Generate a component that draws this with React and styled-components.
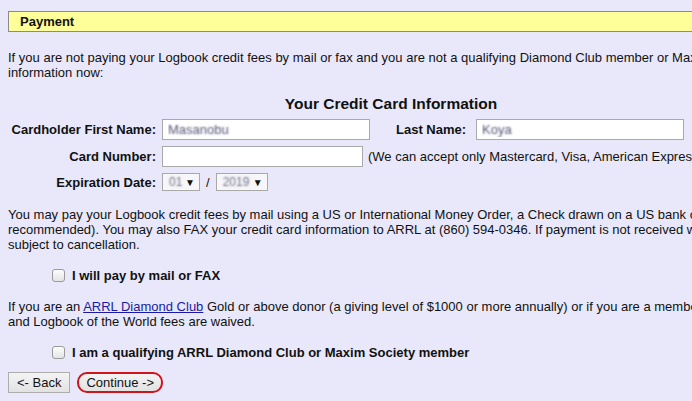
import React from "react";
import styled, { createGlobalStyle } from "styled-components";

const colors = {
  bg: "#e8e8fa",
  bar: "#ffff99",
  barBorder: "#8a8a8a",
  text: "#111111",
  link: "#1a1aa6",
  field: "#ffffff",
  fieldBorder: "#a9a9a9",
};

const GlobalStyle = createGlobalStyle`
  html, body {
    margin: 0;
    background: ${colors.bg};
    overflow: hidden;
  }
  body {
    font-family: "Liberation Sans", Arial, sans-serif;
    font-size: 13px;
    color: ${colors.text};
  }
`;

const Page = styled.div`
  width: 766px;
  padding: 11px 8px 8px;
  line-height: 15px;
`;

const SectionBar = styled.div`
  height: 19px;
  background: ${colors.bar};
  border: 1px solid ${colors.barBorder};
  padding-left: 11px;
  font-weight: bold;
  line-height: 19px;
  width: 900px;
`;

const Para = styled.p`
  margin: ${(p) => p.$top || 0}px 0 0;
  white-space: nowrap;
  line-height: 15px;
`;

const Heading = styled.h3`
  margin: 15px 0 0;
  text-align: center;
  font-size: 15.5px;
  line-height: 18px;
  font-weight: bold;
`;

const FormRow = styled.div`
  display: flex;
  align-items: center;
  margin-top: ${(p) => p.$top}px;
  white-space: nowrap;
`;

const Label = styled.span`
  font-weight: bold;
  width: ${(p) => p.$width || 148}px;
  text-align: right;
  margin-left: ${(p) => p.$left || 0}px;
  margin-right: ${(p) => p.$right || 6}px;
  flex-shrink: 0;
`;

const TextInput = styled.input`
  box-sizing: border-box;
  width: ${(p) => p.$width}px;
  height: 21px;
  border: 1px solid ${colors.fieldBorder};
  background: ${colors.field};
  padding: 1px 5px;
  font-family: "Liberation Sans", Arial, sans-serif;
  font-size: 13px;
  color: transparent;
  text-shadow: 0 0 2px rgba(60, 60, 100, 0.85);
  outline: none;
  flex-shrink: 0;
`;

const Note = styled.span`
  margin-left: 5px;
`;

const Select = styled.div`
  box-sizing: border-box;
  width: ${(p) => p.$width}px;
  height: 18px;
  border: 1px solid ${colors.fieldBorder};
  background: #f7f7f9;
  display: flex;
  align-items: center;
  justify-content: space-between;
  padding: 0 4px 0 6px;
  font-size: 12px;
  flex-shrink: 0;
`;

const Blurred = styled.span`
  color: transparent;
  text-shadow: 0 0 2px rgba(90, 90, 120, 0.85);
`;

const Arrow = styled.span`
  font-size: 10px;
  color: #111;
`;

const Slash = styled.span`
  margin: 0 6px;
`;

const CheckRow = styled.label`
  display: flex;
  align-items: center;
  margin: ${(p) => p.$top}px 0 0 44px;
  font-weight: bold;
  height: 15px;
`;

const Box = styled.span`
  box-sizing: border-box;
  width: 13px;
  height: 13px;
  border: 1px solid #9a9a9a;
  border-radius: 3px;
  background: linear-gradient(#fdfdfd, #e4e4e4);
  margin-right: 7px;
`;

const Link = styled.a`
  color: ${colors.link};
  text-decoration: underline;
`;

const ButtonRow = styled.div`
  display: flex;
  align-items: center;
  margin-top: 12px;
`;

const Button = styled.button`
  box-sizing: border-box;
  height: 21px;
  padding: 0 8px;
  border: 1px solid #adadad;
  background: linear-gradient(#f4f4f4, #e2e2e2);
  font-family: "Liberation Sans", Arial, sans-serif;
  font-size: 13px;
  color: #111;
  border-radius: 0;
`;

const Highlight = styled(Button)`
  margin-left: 7px;
  padding: 0 7px;
  border: 2px solid #d0141c;
  border-radius: 10px;
`;

export default function App() {
  return (
    <>
      <GlobalStyle />
      <Page>
        <SectionBar>Payment</SectionBar>
        <Para $top={18}>
          If you are not paying your Logbook credit fees by mail or fax and you
          are not a qualifying Diamond Club member or Maxim Society member,
          please enter your credit card
          <br />
          information now:
        </Para>

        <Heading>Your Credit Card Information</Heading>

        <FormRow $top={6}>
          <Label>Cardholder First Name:</Label>
          <TextInput $width={208} defaultValue="Masanobu" />
          <Label $width={70} $left={26} $right={10}>
            Last Name:
          </Label>
          <TextInput $width={208} defaultValue="Koya" />
        </FormRow>
        <FormRow $top={6}>
          <Label>Card Number:</Label>
          <TextInput $width={201} defaultValue="" />
          <Note>
            (We can accept only Mastercard, Visa, American Express and
            Discover.)
          </Note>
        </FormRow>
        <FormRow $top={6}>
          <Label>Expiration Date:</Label>
          <Select $width={38}>
            <Blurred>01</Blurred>
            <Arrow>▼</Arrow>
          </Select>
          <Slash>/</Slash>
          <Select $width={52}>
            <Blurred>2019</Blurred>
            <Arrow>▼</Arrow>
          </Select>
        </FormRow>

        <Para $top={16}>
          You may pay your Logbook credit fees by mail using a US or
          International Money Order, a Check drawn on a US bank or a US Postal
          Money Order (Check
          <br />
          recommended). You may also FAX your credit card information to ARRL
          at (860) 594-0346. If payment is not received within 30 days, your
          order is
          <br />
          subject to cancellation.
        </Para>

        <CheckRow $top={16}>
          <Box />I will pay by mail or FAX
        </CheckRow>

        <Para $top={16}>
          If you are an <Link href="#">ARRL Diamond Club</Link> Gold or above
          donor (a giving level of $1000 or more annually) or if you are a
          member of the Maxim Society, your Logbook
          <br />
          and Logbook of the World fees are waived.
        </Para>

        <CheckRow $top={16}>
          <Box />I am a qualifying ARRL Diamond Club or Maxim Society member
        </CheckRow>

        <ButtonRow>
          <Button>&lt;- Back</Button>
          <Highlight>Continue -&gt;</Highlight>
        </ButtonRow>
      </Page>
    </>
  );
}
